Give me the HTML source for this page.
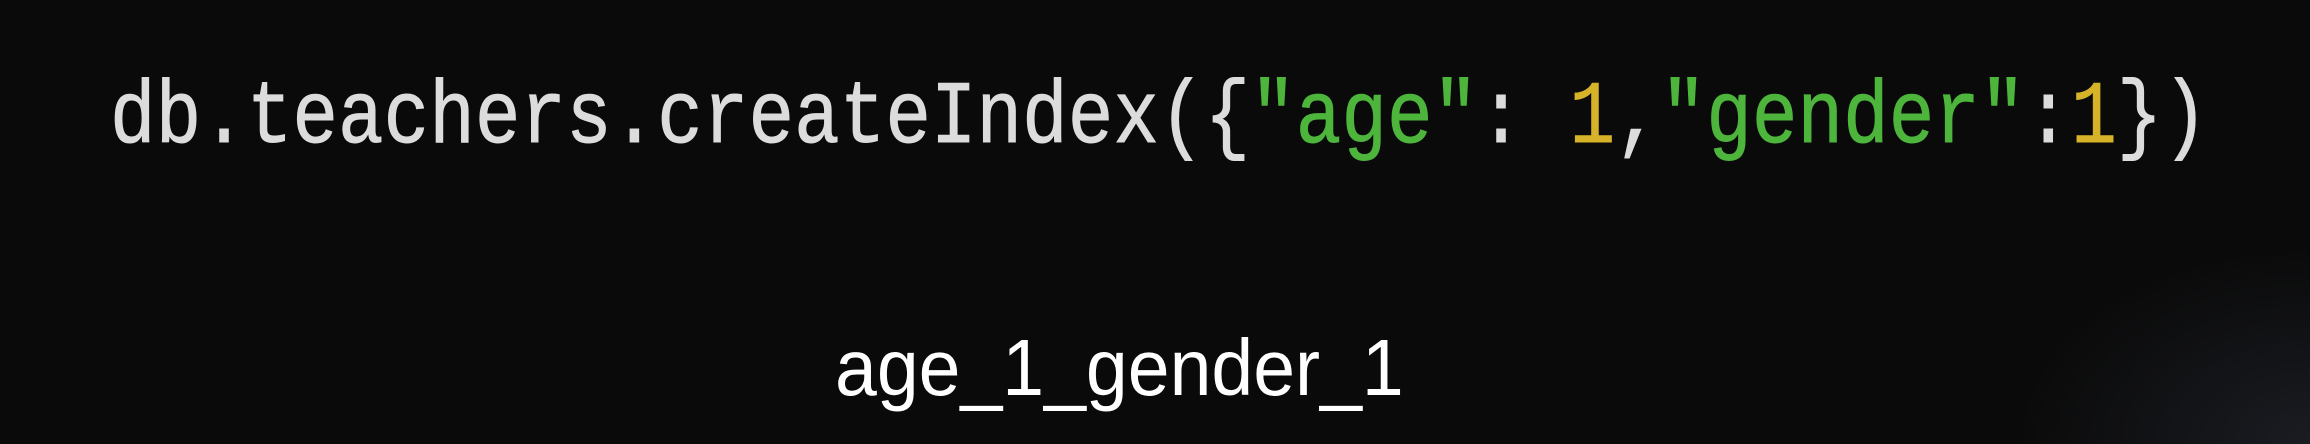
<!DOCTYPE html>
<html><head><meta charset="utf-8"><style>
html,body{margin:0;padding:0;}
body{width:2310px;height:444px;background:#0a0a0a;position:relative;overflow:hidden;}
.glow{position:absolute;right:0;bottom:0;width:300px;height:200px;background:radial-gradient(ellipse at 100% 100%,#1a1c22 0%,rgba(10,10,10,0) 70%);}
.code{position:absolute;left:110px;top:0;font-family:"Liberation Mono",monospace;font-size:76px;color:#dcdcdc;white-space:pre;line-height:1;transform-origin:0 0;-webkit-text-stroke:0.8px currentColor;}
.code span.s{color:#4db53c}
.code span.n{color:#d6b328}
.sub{position:absolute;left:835px;top:0;font-family:"Liberation Sans",sans-serif;font-size:80px;color:#fff;white-space:pre;line-height:1;transform-origin:0 0;}
</style></head><body>
<div class="glow"></div>
<div class="code" style="top:74px;transform:scaleY(1.17)">db.teachers.createIndex({<span class="s">"age"</span>: <span class="n">1</span>,<span class="s">"gender"</span>:<span class="n">1</span>})</div>
<div class="sub" style="top:328px;transform:scaleX(0.94)">age_1_gender_1</div>
</body></html>
